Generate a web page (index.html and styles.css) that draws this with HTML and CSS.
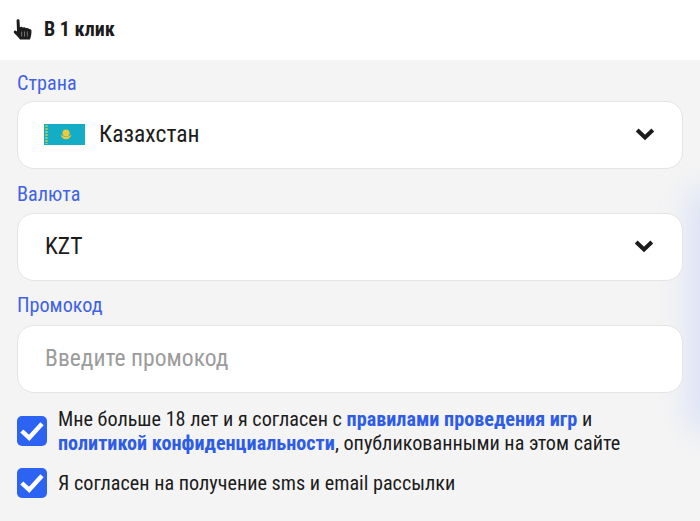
FILE: index.html
```html
<!DOCTYPE html>
<html lang="ru">
<head>
<meta charset="utf-8">
<title>В 1 клик</title>
<link rel="stylesheet" href="styles.css">
</head>
<body>
<header class="head">
  <svg class="hand" width="20" height="22" viewBox="0 0 20 22"><path d="M3.600 2.600C3.700.9 6.400.9 6.500 2.600L6.900 9.300C8 8.300 9.500 8.500 9.900 9.700 11 8.900 12.400 9.100 12.900 10.300 14 9.600 15.500 9.900 16 11 17.500 10.600 18.500 11.500 18.500 13 18.500 16 18 18.500 17 21.500L7 21.500C5 18.500 2.500 17 .9 14.800.2 13.600 1.300 12 2.900 12.700L4 13.500Z" fill="#1c1c1c"/><path d="M8.700 13.500v5M11.500 13.500v5M14.300 13.500v5" stroke="#8a8a8a" stroke-width=".8"/></svg>
  <span class="head-title">В 1 клик</span>
</header>
<main class="form">
  <div class="glow"></div>
  <label class="label">Страна</label>
  <div class="field field-country">
    <svg class="flag" width="41" height="21" viewBox="0 0 41 21"><rect width="41" height="21" fill="#13aec6"/><path d="M2.500 1v19" stroke="#a9c75c" stroke-width="2.400" stroke-dasharray="2 1"/><circle cx="22" cy="9" r="3.600" fill="#eec93a"/><path d="M16.500 10.500c1 3.500 3.500 4.700 5.500 4.700s4.500-1.200 5.500-4.700c-1 1.200-3 2.300-5.500 2.300s-4.500-1.100-5.500-2.300Z" fill="#eec93a"/></svg>
    <span class="value">Казахстан</span>
    <svg class="chev" width="20" height="14" viewBox="0 0 20 14"><path d="M2.200 3 10 10.500 17.800 3" fill="none" stroke="#1c1c1c" stroke-width="4"/></svg>
  </div>
  <label class="label label-second">Валюта</label>
  <div class="field field-currency">
    <span class="value">KZT</span>
    <svg class="chev" width="20" height="14" viewBox="0 0 20 14"><path d="M2.200 3 10 10.500 17.800 3" fill="none" stroke="#1c1c1c" stroke-width="4"/></svg>
  </div>
  <label class="label label-third">Промокод</label>
  <div class="field field-promo">
    <span class="placeholder">Введите промокод</span>
  </div>
  <div class="check check-first">
    <svg class="box" width="30" height="30" viewBox="0 0 30 30"><rect width="30" height="30" rx="5" fill="#2d63f2"/><path d="M4.800 15 12.200 21.800 25 7.800" fill="none" stroke="#fff" stroke-width="4.400"/></svg>
    <p class="check-text">Мне больше 18 лет и я согласен с <a class="link">правилами проведения игр</a> и<br><a class="link">политикой конфиденциальности</a>, опубликованными на этом сайте</p>
  </div>
  <div class="check check-second">
    <svg class="box" width="30" height="30" viewBox="0 0 30 30"><rect width="30" height="30" rx="5" fill="#2d63f2"/><path d="M4.800 15 12.200 21.800 25 7.800" fill="none" stroke="#fff" stroke-width="4.400"/></svg>
    <p class="check-text">Я согласен на получение sms и email рассылки</p>
  </div>
</main>
</body>
</html>
```
FILE: styles.css
```css
* { box-sizing: border-box; }
html, body { margin: 0; padding: 0; }
body {
  width: 700px;
  height: 521px;
  overflow: hidden;
  background: #f4f4f4;
  font-family: Roboto, "Liberation Sans", sans-serif;
  font-stretch: 85%;
  color: #1c1c1c;
}
.head {
  height: 60px;
  background: #fff;
  display: flex;
  align-items: center;
  gap: 11px;
  padding-left: 13px;
}
.hand { display: block; margin-bottom: 2px; }
.head-title { font-size: 20px; font-weight: 700; margin-bottom: 2px; }
.form {
  position: relative;
  height: 461px;
  padding: 12px 17px 0;
  overflow: hidden;
}
.glow {
  position: absolute;
  right: -40px;
  top: 130px;
  width: 50px;
  height: 240px;
  background: #c5d3f8;
  filter: blur(16px);
  opacity: .6;
}
.label {
  display: block;
  position: relative;
  height: 22px;
  line-height: 22px;
  font-size: 20.200px;
  color: #3f62e6;
  margin-bottom: 7px;
}
.label-second { margin-top: 14px; margin-bottom: 8px; }
.label-third { margin-top: 13px; margin-bottom: 9px; }
.field {
  position: relative;
  display: flex;
  align-items: center;
  height: 68px;
  background: #fff;
  border: 1px solid #e4e4e4;
  border-radius: 17px;
  padding: 0 27px 2px;
  font-size: 23.600px;
}
.field-country { padding-left: 26px; }
.field-currency { padding-right: 28px; }
.flag { display: block; margin-right: 14px; }
.value { flex: 1; }
.chev { display: block; }
.placeholder { color: #9c9c9c; }
.check {
  display: flex;
  align-items: center;
  gap: 11px;
  position: relative;
}
.check-first { margin-top: 14px; }
.check-second { margin-top: 13px; }
.box { display: block; flex: none; }
.check-text {
  margin: 0;
  font-size: 20.200px;
  line-height: 24px;
}
.link { color: #2d5ce8; font-weight: 700; }
```
